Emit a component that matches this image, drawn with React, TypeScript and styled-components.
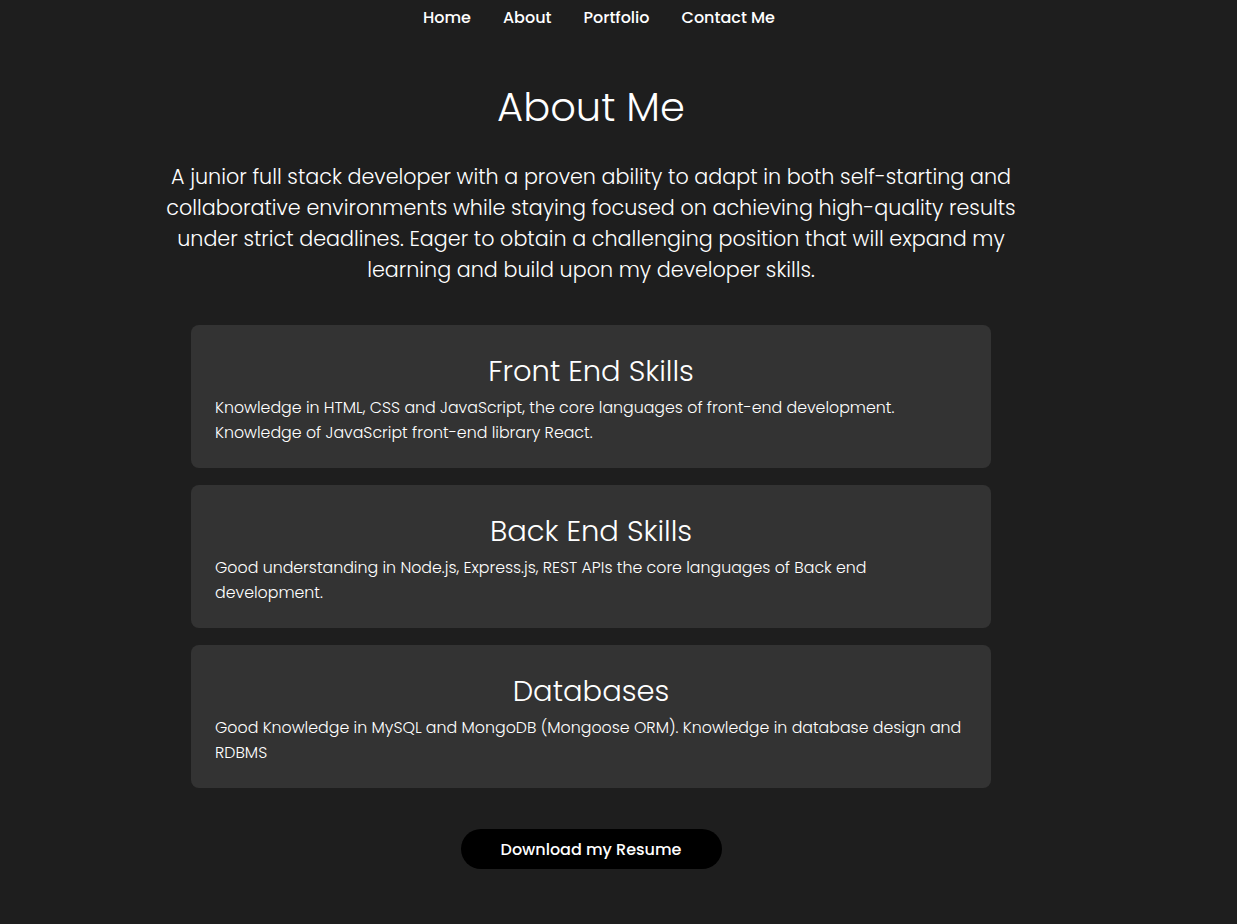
import React from 'react'
import styled, { createGlobalStyle } from 'styled-components'

const GlobalStyle = createGlobalStyle`
  html, body {
    margin: 0;
    padding: 0;
    background: #1e1e1e;
    color: #ffffff;
    font-family: 'Poppins', 'Open Sans', 'Noto Sans', sans-serif;
  }
`

const Page = styled.div`
  width: 1182px;
  min-height: 924px;
  display: flex;
  flex-direction: column;
  align-items: center;
`

const Nav = styled.nav`
  display: flex;
  justify-content: center;
  gap: 32px;
  padding: 8px 0 0 16px;
  height: 33px;
  box-sizing: border-box;
`

const NavLink = styled.a`
  color: #ffffff;
  font-size: 16px;
  font-weight: 500;
  line-height: 20px;
  text-decoration: none;
  cursor: pointer;
`

const Title = styled.h1`
  margin: 51px 0 0;
  font-family: 'Poppins Light', 'Poppins', 'Open Sans', sans-serif;
  font-size: 40px;
  font-weight: 300;
  line-height: 46px;
`

const Intro = styled.p`
  margin: 31px 0 0;
  width: 880px;
  text-align: center;
  font-family: 'Poppins Light', 'Poppins', 'Open Sans', sans-serif;
  font-size: 20.7px;
  font-weight: 300;
  line-height: 31px;
`

const Skills = styled.section`
  margin-top: 40px;
  width: 800px;
  display: flex;
  flex-direction: column;
  gap: 17px;
`

const Card = styled.div`
  background: #333333;
  border-radius: 8px;
  height: 143px;
  box-sizing: border-box;
  padding: 28px 24px 0;
`

const CardTitle = styled.h2`
  margin: 0;
  text-align: center;
  font-family: 'Poppins Light', 'Poppins', 'Open Sans', sans-serif;
  font-size: 29px;
  font-weight: 300;
  line-height: 36px;
`

const CardText = styled.p`
  margin: 6px 0 0;
  font-family: 'Poppins Light', 'Poppins', 'Open Sans', sans-serif;
  font-size: 15.8px;
  font-weight: 300;
  line-height: 25px;
`

const ResumeButton = styled.button`
  margin-top: 41px;
  width: 261px;
  height: 40px;
  border: none;
  border-radius: 20px;
  background: #000000;
  color: #ffffff;
  font-family: inherit;
  font-size: 16px;
  font-weight: 500;
  cursor: pointer;
`

const skills = [
  {
    title: 'Front End Skills',
    text: 'Knowledge in HTML, CSS and JavaScript, the core languages of front-end development. Knowledge of JavaScript front-end library React.',
  },
  {
    title: 'Back End Skills',
    text: 'Good understanding in Node.js, Express.js, REST APIs the core languages of Back end development.',
  },
  {
    title: 'Databases',
    text: 'Good Knowledge in MySQL and MongoDB (Mongoose ORM). Knowledge in database design and RDBMS',
  },
]

const App = () => {
  return (
    <>
      <GlobalStyle />
      <Page>
        <Nav>
          <NavLink>Home</NavLink>
          <NavLink>About</NavLink>
          <NavLink>Portfolio</NavLink>
          <NavLink>Contact Me</NavLink>
        </Nav>
        <Title>About Me</Title>
        <Intro>
          A junior full stack developer with a proven ability to adapt in both self-starting and
          collaborative environments while staying focused on achieving high-quality results under
          strict deadlines. Eager to obtain a challenging position that will expand my learning and
          build upon my developer skills.
        </Intro>
        <Skills>
          {skills.map((s) => (
            <Card key={s.title}>
              <CardTitle>{s.title}</CardTitle>
              <CardText>{s.text}</CardText>
            </Card>
          ))}
        </Skills>
        <ResumeButton>Download my Resume</ResumeButton>
      </Page>
    </>
  )
}

export default App
